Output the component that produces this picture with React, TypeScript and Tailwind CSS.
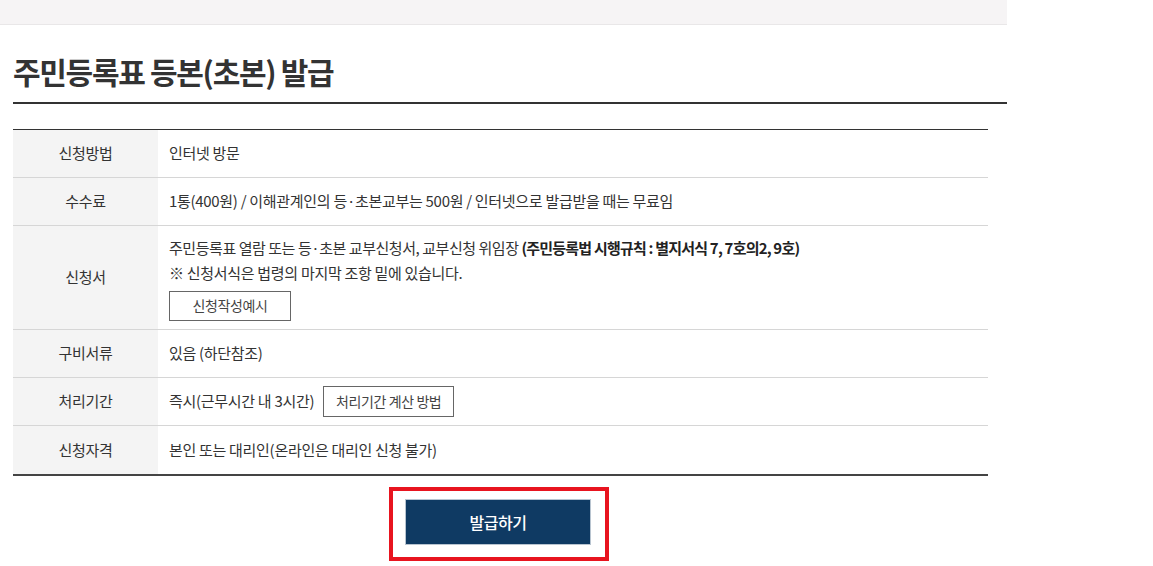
import type { ReactNode } from 'react';

const font = { fontFamily: '"Noto Sans CJK KR", "Noto Sans", sans-serif' };

type Row = { label: string; tall?: boolean; content: ReactNode };

function OutlineButton({ children, className = '' }: { children: ReactNode; className?: string }) {
  return (
    <button
      type="button"
      className={`h-[30px] border border-[#666] bg-white text-[14px] text-[#444] tracking-[-0.4px] ${className}`}
    >
      {children}
    </button>
  );
}

const rows: Row[] = [
  { label: '신청방법', content: <span>인터넷 방문</span> },
  {
    label: '수수료',
    content: <span>1통(400원) / 이해관계인의 등·초본교부는 500원 / 인터넷으로 발급받을 때는 무료임</span>,
  },
  {
    label: '신청서',
    tall: true,
    content: (
      <div className="py-[8px]">
        <p className="leading-[25px] tracking-[-0.45px]">
          주민등록표 열람 또는 등·초본 교부신청서, 교부신청 위임장{' '}
          <b className="font-bold text-[#222] tracking-[-0.8px]">(주민등록법 시행규칙 : 별지서식 7, 7호의2, 9호)</b>
        </p>
        <p className="leading-[25px]">※ 신청서식은 법령의 마지막 조항 밑에 있습니다.</p>
        <OutlineButton className="mt-[6px] w-[122px]">신청작성예시</OutlineButton>
      </div>
    ),
  },
  { label: '구비서류', content: <span>있음 (하단참조)</span> },
  {
    label: '처리기간',
    content: (
      <div className="flex items-center">
        <span>즉시(근무시간 내 3시간)</span>
        <OutlineButton className="ml-[9px] w-[131px] h-[31px]">처리기간 계산 방법</OutlineButton>
      </div>
    ),
  },
  { label: '신청자격', content: <span>본인 또는 대리인(온라인은 대리인 신청 불가)</span> },
];

export default function App() {
  return (
    <div className="min-h-[566px] bg-white" style={font}>
      <div className="w-[1007px]">
        <div className="h-[25px] bg-[#f6f4f5] border-b border-[#e9e7e8]" />

        <div className="pl-[13px]">
          <h1 className="pt-[26px] pb-[11px] text-[30px] leading-[40px] font-bold text-[#333] tracking-[-1.3px] border-b-2 border-[#333]">
            주민등록표 등본(초본) 발급
          </h1>

          <div className="mt-[25px] mr-[19px] border-t border-[#333] border-b-[2px] border-b-[#444] text-[15px] text-[#333] tracking-[-0.3px]">
            {rows.map((r, i) => (
              <div
                key={r.label}
                className={`flex ${i < rows.length - 1 ? 'border-b border-[#d6d6d6]' : ''} ${r.tall ? 'h-[104px]' : 'h-[48px]'}`}
              >
                <div className="w-[145px] shrink-0 flex items-center justify-center bg-[#f4f4f4] text-[#333]">
                  {r.label}
                </div>
                <div className="flex-1 flex items-center pl-[11px] pr-[10px]">{r.content}</div>
              </div>
            ))}
          </div>

          <div className="mr-[22px] flex justify-center pt-[11px]">
            <div className="border-4 border-[#e8141f] pl-[12px] pr-[14px] pt-[8px] pb-[12px]">
              <button
                type="button"
                className="w-[186px] h-[46px] bg-[#0f3a63] border border-[#b8c4d0] text-white text-[16px] font-medium tracking-[-0.5px]"
              >
                발급하기
              </button>
            </div>
          </div>
        </div>
      </div>
    </div>
  );
}
